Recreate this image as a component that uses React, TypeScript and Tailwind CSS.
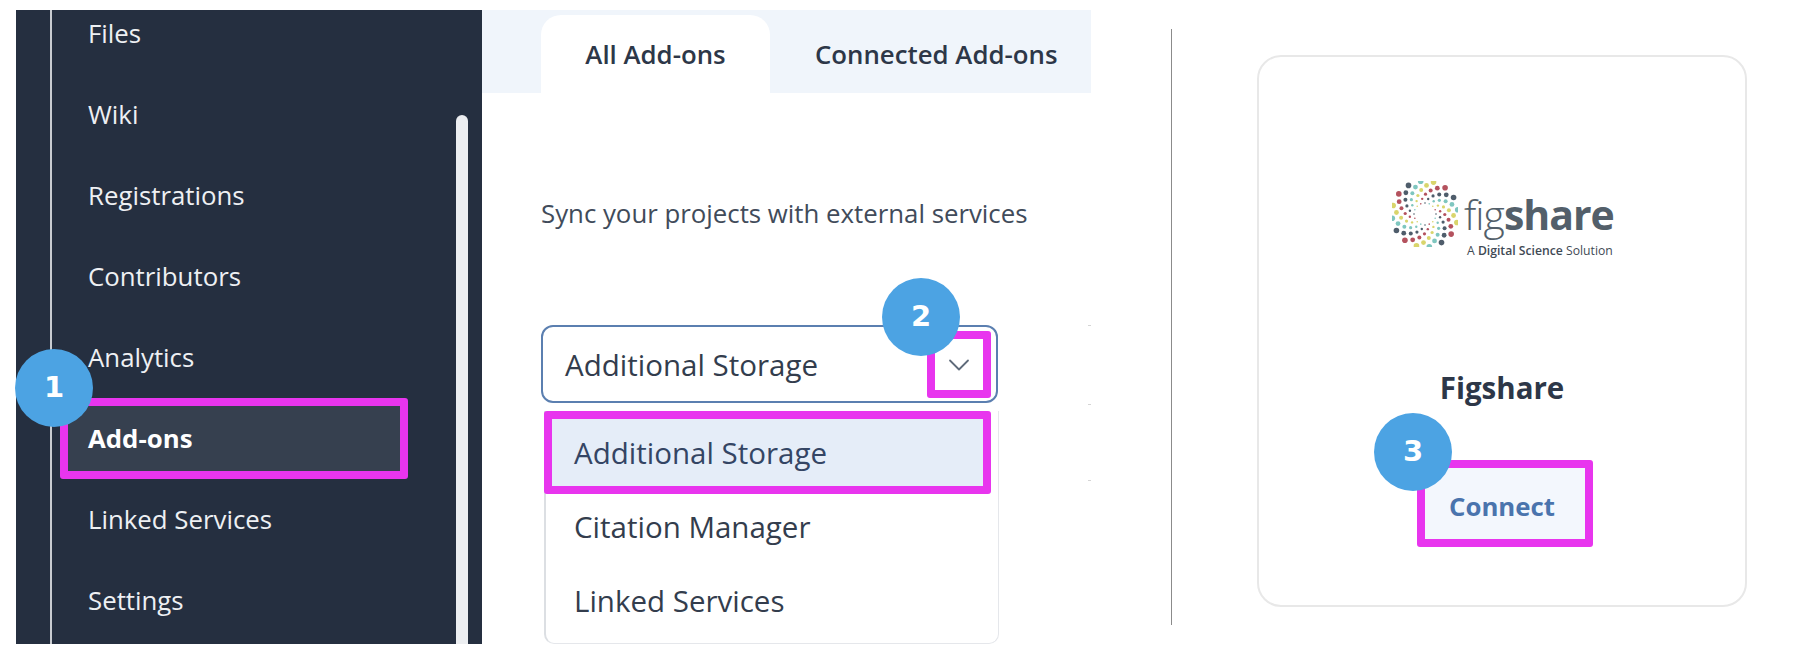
import React from 'react';
import { ChevronDown } from 'lucide-react';

const navItems = ['Files', 'Wiki', 'Registrations', 'Contributors', 'Analytics', 'Add-ons', 'Linked Services', 'Settings'];
const swirlColors = ['#4f5d6b', '#7fc6bf', '#d9d56c', '#b4525e'];

const Badge = ({ n, className }: { n: number; className: string }) => (
  <div
    className={`absolute z-10 flex h-[78px] w-[78px] items-center justify-center rounded-full bg-[#4ca3e3] font-['DejaVu_Sans',sans-serif] text-[29px] font-bold text-white ${className}`}
  >
    {n}
  </div>
);

const Swirl = () => {
  const dots = [];
  for (let arm = 0; arm < 16; arm++) {
    for (let i = 0; i < 6; i++) {
      const r = 11 + i * 4.4;
      const a = ((arm * 22.5 + i * 12) * Math.PI) / 180;
      dots.push(
        <circle
          key={`${arm}-${i}`}
          cx={33 + r * Math.cos(a)}
          cy={33 + r * Math.sin(a)}
          r={0.8 + i * 0.4}
          fill={swirlColors[arm % 4]}
        />
      );
    }
  }
  return (
    <svg width="66" height="66" viewBox="0 0 66 66" className="shrink-0">
      {dots}
    </svg>
  );
};

const Sidebar = () => (
  <div className="relative h-[634px] w-[466px] shrink-0 overflow-hidden bg-[#252f40] pl-[34px] text-white">
    <div className="-mt-[17px] h-[670px] border-l-2 border-[#c9ccd1] pl-[8px]">
      {navItems.map((item) =>
        item === 'Add-ons' ? (
          <div
            key={item}
            className="flex h-[81px] w-[348px] items-center rounded-[3px] border-[8px] border-[#e835ee] bg-[#36404f] pl-[20px] text-[25.8px] font-bold"
          >
            {item}
          </div>
        ) : (
          <div key={item} className="flex h-[81px] items-center pl-[28px] text-[25.8px] text-[#eef0f3]">
            {item}
          </div>
        )
      )}
    </div>
    <div className="absolute left-[440px] top-[105px] h-[540px] w-[12px] rounded-full bg-[#eceef1]" />
  </div>
);

const AddonsPanel = () => (
  <div className="relative h-[634px] w-[609px] shrink-0 overflow-hidden text-[#2d3748]">
    <div className="flex h-[83px] items-end bg-[#f0f5fb] pl-[59px]">
      <div className="flex h-[78px] w-[229px] items-center justify-center rounded-t-[20px] bg-white text-[25.8px] font-semibold">
        All Add-ons
      </div>
      <div className="flex h-[78px] items-center pl-[45px] text-[25.8px] font-semibold">Connected Add-ons</div>
    </div>
    <div className="pl-[59px]">
      <p className="mt-[102px] text-[25.8px] leading-[36px] text-[#414b5a]">Sync your projects with external services</p>
      <div className="mt-[94px] flex h-[78px] w-[457px] items-center justify-between rounded-[12px] border-2 border-[#5b7fb0] pl-[22px] pr-[5px] text-[29.5px] text-[#333d4d]">
        <span className="pt-[2px]">Additional Storage</span>
        <div className="flex h-[67px] w-[64px] items-center justify-center rounded-[3px] border-[8px] border-[#e835ee] pt-[2px]">
          <ChevronDown size={36} strokeWidth={1.2} className="shrink-0 text-[#5f6b7a]" />
        </div>
      </div>
      <div className="ml-[3px] mt-[8px] h-[233px] w-[455px] rounded-b-[10px] border-r border-b border-[#e5e7eb] border-l-2 border-l-[#dcdfe3] text-[29.5px]">
        <div className="-ml-[2px] flex h-[83px] w-[447px] items-center rounded-[3px] border-[8px] border-[#e835ee] bg-[#e5edf8] pl-[22px] pt-[2px] text-[#344564]">
          Additional Storage
        </div>
        <div className="flex h-[66px] items-center pl-[28px] text-[#333d4d]">Citation Manager</div>
        <div className="flex h-[82px] items-center pl-[28px] text-[#333d4d]">Linked Services</div>
      </div>
    </div>
    {/* faint marks of the cut-off column at the right edge */}
    <div className="absolute right-0 top-[315px] h-[1px] w-[3px] bg-[#d5d5d5]" />
    <div className="absolute right-0 top-[394px] h-[1px] w-[3px] bg-[#d5d5d5]" />
    <div className="absolute right-0 top-[470px] h-[1px] w-[3px] bg-[#d5d5d5]" />
  </div>
);

const FigshareCard = () => (
  <div className="ml-[85px] mt-[45px] flex h-[552px] w-[490px] shrink-0 flex-col items-center rounded-[24px] border-2 border-[#e8e8e8]">
    <div className="mt-[124px] flex w-[220px] items-start gap-[6px]">
      <Swirl />
      <div className="pt-[8px] text-[#535f6a]">
        <div className="whitespace-nowrap text-[41px] leading-[50px] tracking-[-1px]">
          <span className="font-light">fig</span>
          <span className="font-bold">share</span>
        </div>
        <div className="ml-[3px] mt-[4px] whitespace-nowrap text-[12.2px] leading-[16px] text-[#3f4a55]">
          A <span className="font-semibold">Digital Science</span> Solution
        </div>
      </div>
    </div>
    <div className="mt-[109px] text-[29.5px] font-bold leading-[40px] text-[#2d3748]">Figshare</div>
    <div className="ml-[6px] mt-[52px] flex h-[87px] w-[176px] items-center justify-center rounded-[3px] border-[8px] border-[#e835ee] bg-[#f3f7fd] pr-[6px] pt-[6px] text-[25.8px] font-bold text-[#4a74ad]">
      Connect
    </div>
  </div>
);

export default function App() {
  return (
    <div className="relative flex h-[656px] w-[1800px] overflow-hidden bg-white pl-[16px] pt-[10px] font-['Open_Sans',sans-serif]">
      <Sidebar />
      <AddonsPanel />
      <div className="ml-[80px] mt-[19px] h-[596px] w-[1px] shrink-0 bg-[#8b8b8b]" />
      <FigshareCard />
      <Badge n={1} className="left-[15px] top-[349px]" />
      <Badge n={2} className="left-[882px] top-[278px]" />
      <Badge n={3} className="left-[1374px] top-[413px]" />
    </div>
  );
}
